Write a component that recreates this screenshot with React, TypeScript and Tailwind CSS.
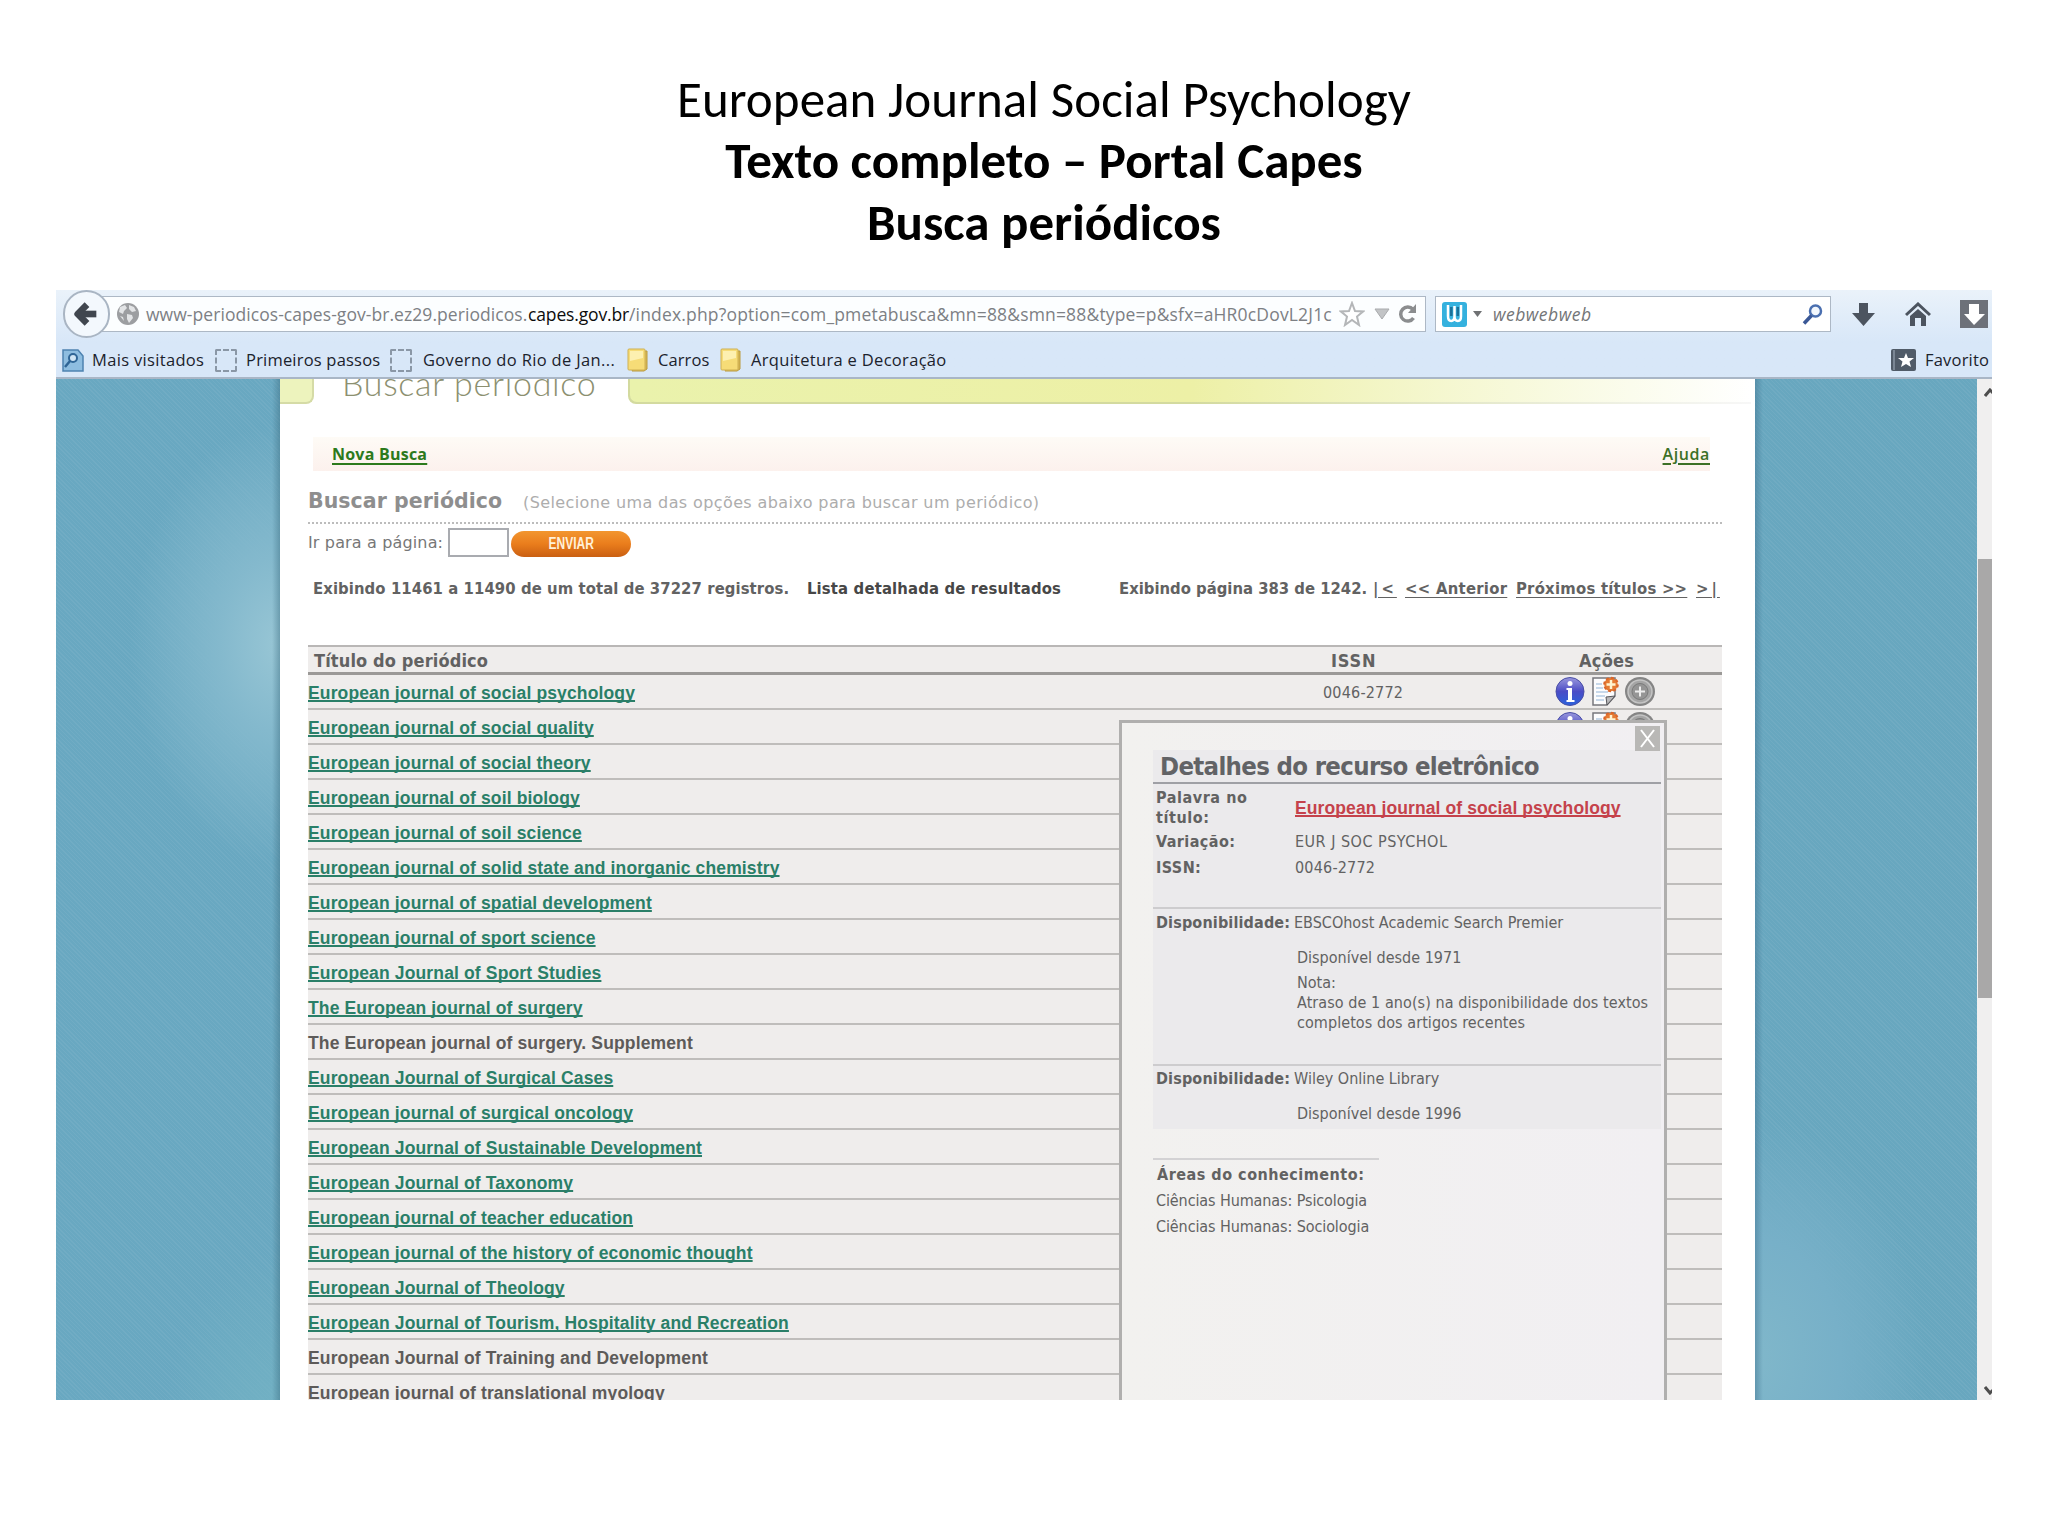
import { ArrowLeft } from "lucide-react";

const journals = [
  { title: "European journal of social psychology", issn: "0046-2772", link: true, actions: true },
  { title: "European journal of social quality", link: true, actions: true },
  { title: "European journal of social theory", link: true },
  { title: "European journal of soil biology", link: true },
  { title: "European journal of soil science", link: true },
  { title: "European journal of solid state and inorganic chemistry", link: true },
  { title: "European journal of spatial development", link: true },
  { title: "European journal of sport science", link: true },
  { title: "European Journal of Sport Studies", link: true },
  { title: "The European journal of surgery", link: true },
  { title: "The European journal of surgery. Supplement" },
  { title: "European Journal of Surgical Cases", link: true },
  { title: "European journal of surgical oncology", link: true },
  { title: "European Journal of Sustainable Development", link: true },
  { title: "European Journal of Taxonomy", link: true },
  { title: "European journal of teacher education", link: true },
  { title: "European journal of the history of economic thought", link: true },
  { title: "European Journal of Theology", link: true },
  { title: "European Journal of Tourism, Hospitality and Recreation", link: true },
  { title: "European Journal of Training and Development" },
  { title: "European journal of translational myology" },
];

export default function App() {
  return (
    <div className="h-[1536px] w-[2048px] overflow-hidden bg-white">
      {/* Slide title */}
      <header className="h-[290px] pl-[40px] pt-[69px] text-center font-['Carlito','Lato',sans-serif] text-[51px] leading-[61.3px] text-black">
        <p className="tracking-[0.06px]">European Journal Social Psychology</p>
        <p className="font-bold">Texto completo – Portal Capes</p>
        <p className="font-bold">Busca periódicos</p>
      </header>

      {/* Browser window */}
      <main className="ml-[56px] flex h-[1110px] w-[1936px] flex-col overflow-hidden">
        <Toolbar />
        <div className="flex min-h-0 flex-1">
          <div className="w-[224px] shrink-0 bg-[#69a8c1] bg-[linear-gradient(to_left,rgba(60,110,130,0.45),transparent_8px),radial-gradient(ellipse_150px_220px_at_100%_26%,#98c6d5_0%,#84b9cd_40%,transparent_100%),radial-gradient(ellipse_120px_200px_at_100%_105%,#74b3c4,transparent),repeating-linear-gradient(45deg,rgba(255,255,255,0.05)_0_1px,transparent_1px_3px)]" />
          <PageContent />
          <div className="flex-1 bg-[#68a7bf] bg-[linear-gradient(to_right,rgba(60,110,140,0.45),transparent_8px),radial-gradient(ellipse_170px_240px_at_0%_96%,#80b7ca_0%,#77b0c8_50%,transparent_100%),repeating-linear-gradient(45deg,rgba(255,255,255,0.05)_0_1px,transparent_1px_3px)]" />
          <Scrollbar />
        </div>
      </main>
    </div>
  );
}

function Toolbar() {
  return (
    <div className="h-[89px] shrink-0 border-b-2 border-[#a9b6c6] bg-linear-to-b from-[#eaf2fa] to-[#d8e7f8] to-60% font-['Open_Sans','Noto_Sans',sans-serif]">
      <div className="relative flex h-[41px] pt-[6px]">
        <div className="absolute left-[7px] top-0 z-10 flex h-[48px] w-[47px] items-center justify-center rounded-full border-2 border-[#a9b5c3] bg-[#f3f8fd]">
          <ArrowLeft size={32} strokeWidth={5} strokeLinecap="butt" color="#40464e" />
        </div>

        {/* Address bar */}
        <div className="ml-[42px] flex h-[36px] w-[1328px] items-center border border-[#adb8c5] bg-[#fcfeff] pl-[17px] text-[17.5px] text-[#7d8084]">
          <svg width="24" height="24" viewBox="0 0 24 24">
            <circle cx="12" cy="12" r="11" fill="#9c9ea1" />
            <path d="M4 5l5-2 2 3-3 3-1 3-4-2zM13 3l5 2 2 4-4 1-3-3zM11 12l5 1 1 3-4 5-2-4zM4 14l3 1 1 4z" fill="#e2e4e6" />
          </svg>
          <span className="ml-[6px] w-[382px] whitespace-nowrap pt-px tracking-[0.06px]">www-periodicos-capes-gov-br.ez29.periodicos.</span>
          <span className="w-[101px] whitespace-nowrap pt-px tracking-[-0.14px] text-[#0c0c0c]">capes.gov.br</span>
          <span className="w-[703px] whitespace-nowrap pt-px tracking-[0.17px]">
            /index.php?option=com_pmetabusca&amp;mn=88&amp;smn=88&amp;type=p&amp;sfx=aHR0cDovL2J1c
          </span>
          <svg className="ml-[7px]" width="26" height="26" viewBox="0 0 26 26">
            <path d="M13 2l3 8 8 .5-6 5 2 8.500-7-5-7 5 2-8.500-6-5 8-.5z" fill="#fff" stroke="#b4b6b8" strokeWidth="2" />
          </svg>
          <svg className="ml-[9px]" width="16" height="12" viewBox="0 0 16 12">
            <path d="M1 1h14l-7 10z" fill="#c2c4c6" stroke="#a9abad" />
          </svg>
          <svg className="ml-[8px]" width="20" height="22" viewBox="0 0 20 22">
            <path d="M15.500 15a7 7 0 1 1-.5-8.500" fill="none" stroke="#8b8d8f" strokeWidth="3.500" />
            <path d="M18 1v9h-8z" fill="#8b8d8f" />
          </svg>
        </div>

        {/* Search box */}
        <div className="ml-[9px] flex h-[36px] w-[396px] items-center border border-[#adb8c5] bg-white pl-[6px]">
          <svg width="25" height="25" viewBox="0 0 25 25">
            <rect width="25" height="25" rx="3" fill="#35b1de" />
            <path d="M6 3v11q0 5 3.200 5t3.300-5V4v10q0 5 3.300 5t3.200-5V3" fill="none" stroke="#fff" strokeWidth="2.500" />
            <path d="M9.300 5v9M15.800 5v9" stroke="#1a6f98" strokeWidth="2.500" />
          </svg>
          <svg className="ml-[6px]" width="9" height="6" viewBox="0 0 9 6">
            <path d="M0 0h9L4.500 6z" fill="#6f7173" />
          </svg>
          <span className="ml-[11px] pt-px text-[17.5px] italic tracking-[0.5px] text-[#737577]">webwebweb</span>
          <svg className="ml-auto mr-[7px]" width="21" height="21" viewBox="0 0 21 21">
            <circle cx="13.500" cy="7" r="5.500" fill="#f2f7fd" stroke="#4a6fb0" strokeWidth="2.500" />
            <path d="M9.500 11.500L2 19.500" stroke="#3a5796" strokeWidth="3.500" />
          </svg>
        </div>

        {/* Toolbar buttons */}
        <svg className="ml-[21px] mt-[7px]" width="23" height="23" viewBox="0 0 23 23">
          <path d="M7 0h9v10h7L11.500 23 0 10h7z" fill="#4c545f" />
        </svg>
        <svg className="ml-[30px] mt-[6px]" width="26" height="24" viewBox="0 0 26 24">
          <path d="M1 13L13 2l12 11" fill="none" stroke="#4c545f" strokeWidth="3" />
          <path d="M5 14l8-7 8 7v10h-5v-8h-6v8H5z" fill="#4c545f" />
        </svg>
        <svg className="ml-[29px] mt-[4px] shrink-0" width="28" height="28" viewBox="0 0 28 28">
          <rect width="28" height="28" fill="#6d7179" />
          <path d="M9 4h10v10h6L14 25 4 14h5z" fill="#fff" />
        </svg>
      </div>

      {/* Bookmarks */}
      <div className="flex items-center whitespace-nowrap pt-[17px] text-[16.5px] leading-[24px] text-[#1b222c]">
        <svg className="ml-[6px]" width="22" height="23" viewBox="0 0 22 23">
          <path d="M1 1h15l5 6v15H1z" fill="#8ebde0" stroke="#4d82b0" strokeWidth="1.500" />
          <circle cx="11" cy="9" r="4" fill="#cfe4f4" stroke="#2f6596" strokeWidth="2" />
          <path d="M8 12l-5 6" stroke="#2f6596" strokeWidth="2.500" />
        </svg>
        <span className="ml-[8px] w-[123px] tracking-[0.33px]">Mais visitados</span>
        <EmptyBookmark />
        <span className="ml-[9px] w-[144px] tracking-[0.2px]">Primeiros passos</span>
        <EmptyBookmark />
        <span className="ml-[11px] w-[204px] tracking-[0.35px]">Governo do Rio de Jan...</span>
        <Folder />
        <span className="ml-[9px] w-[62px] tracking-[0.1px]">Carros</span>
        <Folder />
        <span className="ml-[9px] tracking-[0.31px]">Arquitetura e Decoração</span>
        <svg className="ml-auto" width="25" height="22" viewBox="0 0 25 22">
          <rect width="25" height="22" rx="2" fill="#505b68" />
          <path d="M3 1v20" stroke="#8995a3" strokeWidth="1.500" />
          <path d="M15 4l2 5h6l-4.500 3.500L20 18l-5-3-5 3 1.500-5.500L7 9h6z" fill="#fff" />
        </svg>
        <span className="ml-[9px] w-[67px] tracking-[0.2px]">Favorito</span>
      </div>
    </div>
  );
}

function EmptyBookmark() {
  return <span className="h-[23px] w-[22px] rounded-[2px] border-2 border-dashed border-[#8a97a6]" />;
}

function Folder() {
  return (
    <svg width="22" height="24" viewBox="0 0 22 24">
      <path d="M15 3h5v18l-3 2H5z" fill="#d9b956" stroke="#b99a3c" />
      <rect x="1" y="1" width="17" height="21" rx="1" fill="#f6dc77" stroke="#cfb052" />
      <path d="M3 3h13v7L3 13z" fill="#fdf0b0" />
    </svg>
  );
}

function PageContent() {
  return (
    <div className="relative w-[1475px] shrink-0 overflow-hidden bg-white font-['DejaVu_Sans_Condensed','DejaVu_Sans',sans-serif] text-[16px] text-[#626262]">
      {/* Tabs, cut off by the scroll position */}
      <div className="flex h-[25px]">
        <div className="w-[34px] rounded-br-[8px] border-b-2 border-r-2 border-[#d5dba6] bg-[#edf3bd]" />
        <div className="flex w-[314px] items-end overflow-hidden pl-[28px]">
          <span className="mb-[1px] whitespace-nowrap font-['Lato',sans-serif] text-[34px] font-light leading-[40px] tracking-[0.7px] text-[#8c9070]">
            Buscar periódico
          </span>
        </div>
        <div className="w-[1123px] rounded-bl-[8px] bg-linear-to-r from-[#d3da9f] from-50% to-[#f7f7f7] pb-[2px] pl-[2px]">
          <div className="h-full rounded-bl-[7px] bg-linear-to-r from-[#eaf2ac] via-[#edf0a6] via-50% to-white" />
        </div>
      </div>

      <div className="ml-[33px] mt-[33px] flex h-[34px] w-[1397px] justify-between bg-linear-to-b from-[#fefbf6] to-[#fcf1ed] pl-[19px] font-['Open_Sans','Noto_Sans',sans-serif] leading-[34px]">
        <a className="font-bold tracking-[0.23px] text-[#2c7a1c] underline decoration-2 underline-offset-[3px]">Nova Busca</a>
        <a className="font-semibold tracking-[0.6px] text-[#3c7026] underline decoration-2 underline-offset-[3px]">Ajuda</a>
      </div>

      <div className="ml-[28px] w-[1414px]">
        <div className="flex h-[53px] items-baseline border-b-2 border-dotted border-[#bcbcbc] pt-[14px] leading-[32px]">
          <h1 className="w-[215px] font-['DejaVu_Sans',sans-serif] text-[20.5px] font-bold tracking-[0.05px] text-[#8e8e8e]">Buscar periódico</h1>
          <p className="font-['DejaVu_Sans',sans-serif] tracking-[0.39px] text-[#adadad]">(Selecione uma das opções abaixo para buscar um periódico)</p>
        </div>

        <div className="flex h-[53px] items-start pt-[4px]">
          <label className="w-[140px] whitespace-nowrap font-['DejaVu_Sans',sans-serif] leading-[30px] tracking-[0.15px] text-[#777]">Ir para a página:</label>
          <div className="h-[29px] w-[61px] border-2 border-[#a9abb0] bg-white" />
          <button className="ml-[2px] mt-[3px] h-[26px] w-[120px] rounded-full bg-linear-to-b from-[#f2962f] via-[#ea7d1c] to-[#c95f12]">
            <span className="inline-block origin-center scale-x-75 font-['Liberation_Sans',Arial,sans-serif] text-[16px] font-bold leading-[26px] text-[#fff0d8]">
              ENVIAR
            </span>
          </button>
        </div>

        <div className="flex h-[68px] whitespace-nowrap pl-[5px] text-[16.5px] font-bold leading-[24px]">
          <span className="w-[494px] tracking-[0.09px]">Exibindo 11461 a 11490 de um total de 37227 registros.</span>
          <span className="w-[312px] tracking-[0.16px] text-[#474747]">Lista detalhada de resultados</span>
          <span className="w-[254px]">Exibindo página 383 de 1242.</span>
          <a className="mr-[8px] w-[24px] tracking-[3px] underline underline-offset-[3px]">|&lt;</a>
          <a className="mr-[8px] w-[103px] tracking-[0.28px] underline underline-offset-[3px]">&lt;&lt; Anterior</a>
          <a className="mr-[8px] w-[172px] tracking-[0.24px] underline underline-offset-[3px]">Próximos títulos &gt;&gt;</a>
          <a className="tracking-[3px] underline underline-offset-[3px]">&gt;|</a>
        </div>

        <JournalTable />
      </div>

      <DetailsPopup />
    </div>
  );
}

function JournalTable() {
  return (
    <div className="bg-[#efedec]">
      <div className="flex h-[30px] border-b-3 border-t-2 border-b-[#9b9997] border-t-[#b9b7b6] pl-[6px] text-[18px] font-bold leading-[27px]">
        <span className="w-[1017px] tracking-[0.13px]">Título do periódico</span>
        <span className="w-[248px] tracking-[0.8px]">ISSN</span>
        <span className="tracking-[0.28px]">Ações</span>
      </div>
      {journals.map((j) => (
        <div key={j.title} className="flex h-[35px] border-b-2 border-[#bfbdbb] leading-[36px]">
          <div className="w-[1015px] font-['Liberation_Sans',Arial,sans-serif] text-[17.5px] font-bold tracking-[0.14px]">
            {j.link ? (
              <a className="text-[#2a7f68] underline decoration-2 underline-offset-1 [text-decoration-skip-ink:none]">{j.title}</a>
            ) : (
              <span className="text-[#5d5b59]">{j.title}</span>
            )}
          </div>
          <span className="w-[232px] tracking-[0.19px]">{j.issn}</span>
          {j.actions && <Actions />}
        </div>
      ))}
    </div>
  );
}

function Actions() {
  return (
    <div className="flex items-start pt-px">
      <svg width="30" height="31" viewBox="0 0 30 31">
        <defs>
          <linearGradient id="info" x1="0" y1="0" x2="0" y2="1">
            <stop offset="0" stopColor="#9a98dc" />
            <stop offset="0.5" stopColor="#4b4cc6" />
            <stop offset="1" stopColor="#2a62dc" />
          </linearGradient>
        </defs>
        <circle cx="15" cy="15.500" r="14" fill="url(#info)" stroke="#4a4fa6" />
        <circle cx="15" cy="7.500" r="2.500" fill="#fff" />
        <path d="M11.500 12h5.500v12h2.500v2h-8v-2H13V14h-1.500z" fill="#fff" />
      </svg>
      <svg className="ml-[6px]" width="29" height="31" viewBox="0 0 29 31">
        <path d="M2 2h22v18l-8 9H2z" fill="#fcfcfd" stroke="#77777c" strokeWidth="1.500" />
        <path d="M24 20l-9 1 1 8z" fill="#b9b9bb" stroke="#55555a" />
        <path d="M5 8h6M5 12h7M5 16h12M5 20h9M5 24h8" stroke="#b5cbe4" strokeWidth="1.500" />
        <circle cx="20" cy="8.500" r="6.800" fill="#e57a33" stroke="#d9652a" strokeWidth="2" strokeDasharray="3 2.300" />
        <path d="M20 4v9M15.500 8.500h9" stroke="#fff3d0" strokeWidth="2.500" />
      </svg>
      <svg className="ml-[4px]" width="33" height="31" viewBox="0 0 33 31">
        <ellipse cx="16" cy="15.500" rx="15" ry="14.500" fill="#858585" />
        <ellipse cx="16" cy="15.500" rx="12" ry="11.500" fill="#a5a5a5" stroke="#c4c4c4" strokeWidth="1.500" />
        <circle cx="16" cy="15.500" r="8" fill="#959595" stroke="#7a7a7a" />
        <path d="M16 10.500v10M11 15.500h10" stroke="#ececec" strokeWidth="2" />
      </svg>
    </div>
  );
}

function DetailsPopup() {
  return (
    <div className="absolute left-[839px] top-[341px] h-[720px] w-[548px] border-[3px] border-[#b0afae] bg-linear-to-r from-[#f2f1ef] to-[#f1eff2] pl-[31px] pt-[27px] leading-[26px]">
      <div className="absolute right-[4px] top-[3px] flex h-[25px] w-[25px] items-center justify-center bg-[#b9b8b6]">
        <svg width="17" height="19" viewBox="0 0 17 19">
          <path d="M2 1l13 17M15 1L2 18" stroke="#fff" strokeWidth="2" />
        </svg>
      </div>

      <div className="w-[508px] bg-[#ebeaec]">
        <h2 className="h-[34px] whitespace-nowrap border-b-2 border-[#9fa0a5] pl-[7px] text-[25.5px] font-bold leading-[32px] tracking-[-0.66px] text-[#626366]">
          Detalhes do recurso eletrônico
        </h2>
        <div className="grid h-[123px] grid-cols-[139px_1fr] content-start items-center pl-[3px] pt-[4px]">
          <span className="w-[100px] font-bold leading-[20px] tracking-[0.57px]">Palavra no título:</span>
          <a className="whitespace-nowrap font-['Liberation_Sans',Arial,sans-serif] text-[17.5px] font-bold tracking-[0.1px] text-[#c5424b] underline decoration-2 underline-offset-1 [text-decoration-skip-ink:none]">
            European journal of social psychology
          </a>
          <span className="mt-px font-bold tracking-[0.42px]">Variação:</span>
          <span className="mt-px tracking-[0.49px]">EUR J SOC PSYCHOL</span>
          <span className="font-bold tracking-[0.42px]">ISSN:</span>
          <span className="tracking-[0.19px]">0046-2772</span>
        </div>
        <div className="h-[157px] border-t-2 border-[#cdccce] pl-[3px] pt-px">
          <div className="flex">
            <span className="w-[138px] font-bold tracking-[0.15px]">Disponibilidade:</span>
            <span>EBSCOhost Academic Search Premier</span>
          </div>
          <div className="ml-[141px] mt-[9px]">
            <p>Disponível desde 1971</p>
            <p className="mt-[2px] leading-[20px]">Nota:</p>
            <p className="whitespace-nowrap leading-[20px] tracking-[0.07px]">
              Atraso de 1 ano(s) na disponibilidade dos textos
              <br />
              completos dos artigos recentes
            </p>
          </div>
        </div>
        <div className="h-[65px] border-t-2 border-[#cdccce] pl-[3px]">
          <div className="flex">
            <span className="w-[138px] font-bold tracking-[0.15px]">Disponibilidade:</span>
            <span>Wiley Online Library</span>
          </div>
          <p className="ml-[141px] mt-[9px]">Disponível desde 1996</p>
        </div>
      </div>

      <div className="mt-[29px] w-[226px] whitespace-nowrap border-t-2 border-[#d3d2d4] pl-[3px] pt-[2px]">
        <p className="pl-px font-bold tracking-[0.51px]">Áreas do conhecimento:</p>
        <p className="tracking-[-0.1px]">Ciências Humanas: Psicologia</p>
        <p className="tracking-[-0.1px]">Ciências Humanas: Sociologia</p>
      </div>
    </div>
  );
}

function Scrollbar() {
  return (
    <div className="flex w-[15px] shrink-0 flex-col items-end overflow-hidden bg-[#f0efef]">
      <svg className="mt-[9px] shrink-0" width="8" height="9" viewBox="0 0 8 9">
        <path d="M1 8l5-6 6 6" fill="none" stroke="#4d4d4d" strokeWidth="3" />
      </svg>
      <div className="mt-[162px] h-[439px] w-[14px] shrink-0 bg-[#a9a8a8]" />
      <svg className="mb-[5px] mt-auto shrink-0" width="8" height="9" viewBox="0 0 8 9">
        <path d="M1 1l5 6 6-6" fill="none" stroke="#4d4d4d" strokeWidth="3" />
      </svg>
    </div>
  );
}
